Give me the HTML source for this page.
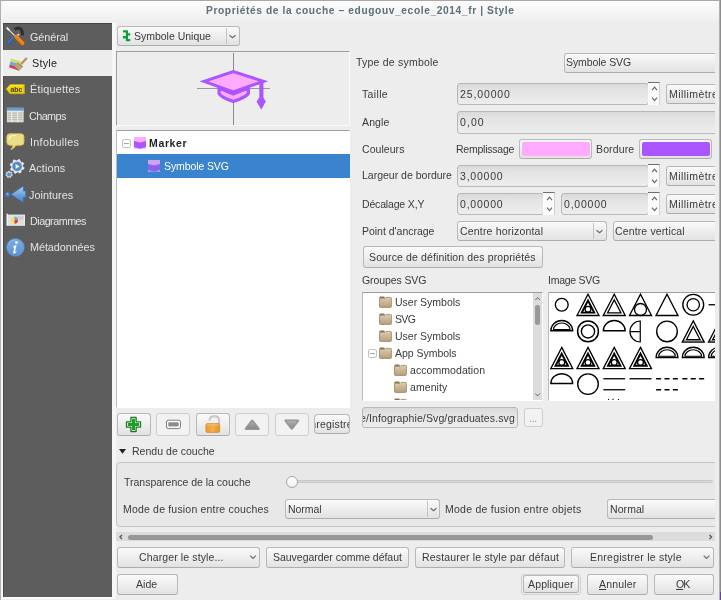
<!DOCTYPE html>
<html lang="fr"><head><meta charset="utf-8"><title>Propriétés de la couche</title>
<style>
html,body{margin:0;padding:0}
body{width:721px;height:600px;overflow:hidden;position:relative;background:#ededed;
 font-family:"Liberation Sans",sans-serif;font-size:10.5px;color:#363b3e;}
.t{will-change:transform}
.a{position:absolute;white-space:nowrap;box-sizing:border-box}
.t{position:absolute;white-space:nowrap;line-height:14px;height:14px}
#tbar{left:1px;top:1px;width:719px;height:22px;background:linear-gradient(#fdfdfd,#ededed)}
#side{left:3px;top:23px;width:109px;height:574px;background:#5d5d5d}
.btn{border:1px solid #b9b9b9;border-bottom-color:#adadad;border-radius:3px;background:linear-gradient(#fafafa,#e2e2e2)}
.btn.dis{border-color:#cdcdcd;background:#f2f2f2}
.ent{border:1px solid #b8b8b8;border-radius:3px;background:linear-gradient(#d9d9d9 0,#e2e2e2 5px,#e6e6e6 50%,#ededed 100%)}
.spb{background:#fbfbfb;border-top:1px solid #6e6e6e}
.frame{border:1px solid;border-color:#9e9e9e #fafafa #fafafa #9e9e9e;background:#ededed}
.white{border:1px solid;border-color:#9e9e9e #fff #fff #bcbcbc;background:#fff}
svg{position:absolute;overflow:visible}
</style></head><body>
<div class="a" style="left:0px;top:0px;width:721px;height:1px;background:#a8a8a8;"></div>
<div class="a" style="left:0px;top:0px;width:1px;height:600px;background:#b0b0b0;"></div>
<div class="a" id="tbar"></div>
<div class="t" style="left:205.90px;top:3.97px;letter-spacing:0.616px;font-size:10.2px;font-weight:bold;color:#5c6f7a;">Propriétés de la couche – edugouv_ecole_2014_fr | Style</div>
<div class="a" id="side"></div>
<div class="a" style="left:3px;top:23px;width:109px;height:1px;background:#444;"></div>
<div class="a" style="left:3px;top:23px;width:1px;height:574px;background:#4c4c4c;"></div>
<div class="a" style="left:3px;top:49.6px;width:109px;height:26.4px;background:#ededed;"></div>
<div class="t" style="left:29.90px;top:29.66px;letter-spacing:-0.037px;font-size:10.8px;color:#e4e4e4;">Général</div>
<div class="t" style="left:31.90px;top:55.99px;letter-spacing:0.221px;font-size:10.8px;color:#1e1e1e;">Style</div>
<div class="t" style="left:29.70px;top:82.32px;letter-spacing:0.241px;font-size:10.8px;color:#e4e4e4;">Étiquettes</div>
<div class="t" style="left:29.40px;top:108.65px;letter-spacing:-0.564px;font-size:10.8px;color:#e4e4e4;">Champs</div>
<div class="t" style="left:29.90px;top:134.98px;letter-spacing:0.296px;font-size:10.8px;color:#e4e4e4;">Infobulles</div>
<div class="t" style="left:29.40px;top:161.31px;letter-spacing:0.132px;font-size:10.8px;color:#e4e4e4;">Actions</div>
<div class="t" style="left:29.40px;top:187.64px;letter-spacing:0.048px;font-size:10.8px;color:#e4e4e4;">Jointures</div>
<div class="t" style="left:29.70px;top:213.97px;letter-spacing:-0.523px;font-size:10.8px;color:#e4e4e4;">Diagrammes</div>
<div class="t" style="left:29.70px;top:240.30px;letter-spacing:-0.054px;font-size:10.8px;color:#e4e4e4;">Métadonnées</div>
<div class="a" style="left:112px;top:23px;width:4px;height:574px;background:#f6f6f6;"></div>
<div class="a" style="left:3px;top:597px;width:112px;height:1.5px;background:#fafafa;"></div>
<div class="a" style="left:1px;top:1px;width:2px;height:599px;background:#f6f6f6;"></div>
<svg style="left:0;top:0" width="130" height="270" viewBox="0 0 130 270">
<defs>
<linearGradient id="gj" x1="0" y1="0" x2="0" y2="1"><stop offset="0" stop-color="#b4d4f2"/><stop offset="0.55" stop-color="#6a9fdc"/><stop offset="1" stop-color="#4a7fc6"/></linearGradient>
<linearGradient id="gi" x1="0" y1="0" x2="0" y2="1"><stop offset="0" stop-color="#7aaae0"/><stop offset="1" stop-color="#5f93d2"/></linearGradient>
</defs>
<g>
<path d="M14.6 29.4 Q19.4 26.6 21.6 30.2 Q22.8 32.6 22.4 35.4" fill="none" stroke="#2b3032" stroke-width="3.1"/>
<path d="M16.9 34.9 L18.6 33.4 L19.6 34.6 L18 36.2 Z" fill="#e6e6e6"/>
<path d="M7.2 28.2 L14.6 35.6" stroke="#e4e4e4" stroke-width="1.1" stroke-linecap="round"/>
<path d="M7.2 28.2 L8.6 29.6" stroke="#fff" stroke-width="1.7" stroke-linecap="round"/>
<path d="M13.6 37.6 L8.6 42.9" stroke="#2f5f9e" stroke-width="3.4" stroke-linecap="round"/>
<path d="M13.2 37.2 L8.4 42.3" stroke="#4a7cc0" stroke-width="1.2" stroke-linecap="round"/>
<path d="M16 36.6 L22.6 43.4" stroke="#f57900" stroke-width="3.8" stroke-linecap="round"/>
<path d="M16.8 36.2 L23.2 42.8" stroke="#fc9a3a" stroke-width="1" stroke-linecap="round"/>
</g>
<g>
<path d="M11 58.5 L21.2 61.5 L20.5 64.6 L10.4 61.4 Z" fill="#d6db6c"/>
<path d="M10.4 61.4 L20.5 64.6 L19.8 67.7 L9.7 64.4 Z" fill="#6fa9e2"/>
<path d="M9.7 64.4 L19.8 67.7 L19 70.8 L9.1 67.3 Z" fill="#d2425c"/>
<path d="M26.3 58.6 L21.7 63.6" stroke="#b39656" stroke-width="2.2" stroke-linecap="round"/>
<path d="M17.4 62.4 L23 66.6 L19.3 70.8 L14.8 66.6 Z" fill="#b9a274"/>
<path d="M17.4 62.4 L23 66.6 L22.3 67.4 L16.7 63.2 Z" fill="#a48c58"/>
</g>
<g>
<path d="M6.3 89.1 L10 84.6 L24.3 84.6 L24.3 93.7 L10 93.7 Z" fill="#edd400" stroke="#c9ad0a" stroke-width="0.9" stroke-linejoin="round"/>
<path d="M7.6 89.1 L10.4 85.7 L23.2 85.7" fill="none" stroke="#fbee7a" stroke-width="0.8"/>
<text x="10.4" y="91.6" font-family="Liberation Sans, sans-serif" font-weight="bold" font-size="7.4" fill="#3a3a2a" textLength="12" lengthAdjust="spacingAndGlyphs">abc</text>
</g>
<g>
<rect x="6.9" y="107.8" width="16.8" height="14.5" fill="#d9dbd2"/>
<rect x="6.9" y="107.8" width="16.8" height="3" fill="#6b99d2"/>
<rect x="8" y="112.6" width="14.6" height="0.9" fill="#b6b8ae"/>
<rect x="8" y="114.8" width="14.6" height="0.9" fill="#b6b8ae"/>
<rect x="8" y="117" width="14.6" height="0.9" fill="#b6b8ae"/>
<rect x="8" y="119.2" width="14.6" height="0.9" fill="#b6b8ae"/>
<rect x="11.3" y="111" width="0.9" height="11.3" fill="#f4f4ee"/><rect x="17.3" y="111" width="0.9" height="11.3" fill="#f4f4ee"/>
<rect x="6.9" y="110.8" width="16.8" height="0.7" fill="#eef"/>
</g>
<g>
<path d="M10 133.8 H20.8 Q23.9 133.8 23.9 136.8 V142.2 Q23.9 145.2 20.8 145.2 H16 Q14.6 148 11 149.6 Q12.8 147.4 13 145.2 H10 Q6.9 145.2 6.9 142.2 V136.8 Q6.9 133.8 10 133.8 Z" fill="#e9dd86" stroke="#e3c64e" stroke-width="0.9"/>
<path d="M9.2 139.6 Q8.8 136 12 135.8 L15.4 135.6" fill="none" stroke="#fffbe0" stroke-width="0.9" stroke-linecap="round"/>
</g>
<g>
<path d="M24.06 167.81 L23.65 169.14 L21.74 169.53 L21.05 170.37 L21.02 172.32 L19.79 172.97 L18.17 171.90 L17.08 172.00 L15.69 173.36 L14.36 172.95 L13.97 171.04 L13.13 170.35 L11.18 170.32 L10.53 169.09 L11.60 167.47 L11.50 166.38 L10.14 164.99 L10.55 163.66 L12.46 163.27 L13.15 162.43 L13.18 160.48 L14.41 159.83 L16.03 160.90 L17.12 160.80 L18.51 159.44 L19.84 159.85 L20.23 161.76 L21.07 162.45 L23.02 162.48 L23.67 163.71 L22.60 165.33 L22.70 166.42 Z" fill="#ececec" stroke="#ececec" stroke-width="0.8" stroke-linejoin="round"/>
<circle cx="17.1" cy="166.4" r="4.5" fill="#4f8ccc" stroke="#3f78b8" stroke-width="0.5"/>
<path d="M15.6 164 L19.6 166.4 L15.6 168.8 Z" fill="#fff"/>
<path d="M12.38 174.73 L12.23 175.45 L11.32 175.76 L10.96 176.22 L10.89 177.17 L10.23 177.50 L9.42 176.98 L8.84 176.99 L8.05 177.53 L7.38 177.22 L7.28 176.26 L6.92 175.81 L6.00 175.53 L5.83 174.81 L6.51 174.14 L6.64 173.57 L6.28 172.68 L6.74 172.10 L7.69 172.22 L8.21 171.96 L8.69 171.13 L9.43 171.12 L9.93 171.94 L10.46 172.18 L11.40 172.04 L11.87 172.61 L11.54 173.51 L11.68 174.08 Z" fill="#d8dce0" stroke="#d8dce0" stroke-width="0.8" stroke-linejoin="round"/>
<circle cx="9.1" cy="174.4" r="2" fill="#5b92cc"/>
</g>
<g>
<path d="M11 194.4 L23.3 186.1 L23.5 190.9 L25.8 190.9 L25.8 197.4 L23.5 197.4 L23.3 202.8 Z" fill="url(#gj)" stroke="#3d6cb2" stroke-width="0.8" stroke-linejoin="round"/>
<circle cx="7.6" cy="194.6" r="2.5" fill="#4f80c6" stroke="#3a66aa" stroke-width="0.6"/>
<circle cx="7.4" cy="193.8" r="1" fill="#86b0e4"/>
</g>
<g>
<rect x="6.5" y="213.8" width="1.6" height="12" fill="#f2f2f2"/>
<rect x="8.1" y="214.6" width="16.9" height="11.2" fill="#ebebe8"/>
<rect x="9.2" y="215.6" width="14.8" height="9.2" fill="#e0e0dc"/>
<path d="M17 216 L23.6 216 L23.6 219 L20 221 Z" fill="#cfd0cb"/>
<path d="M14.5 216.5 A3.6 3.6 0 0 0 14.5 223.7 Z" fill="#f2e264"/>
<path d="M14.5 216.5 A3.6 3.6 0 0 1 18.1 220.1 L14.5 220.1 Z" fill="#6ea4e2"/>
<path d="M18.1 220.1 A3.6 3.6 0 0 1 14.5 223.7 L14.5 220.1 Z" fill="#e43a32"/>
</g>
<g>
<circle cx="15.4" cy="247.4" r="8.9" fill="url(#gi)" stroke="#5286c8" stroke-width="0.7"/>
<path d="M8.6 245.4 Q9.6 240.6 14.6 240" fill="none" stroke="#9cc2ec" stroke-width="0.7"/>
<circle cx="16.5" cy="242.5" r="1.35" fill="#fff"/>
<path d="M12.6 247.2 Q14 245.2 16.6 245 L15 251.6 Q15.6 252 17.2 250.8 Q16 253.6 13 253.8 L14.4 247.6 Q13.6 247.2 12.6 247.2 Z" fill="#fff"/>
</g>
</svg>
<div class="a btn" style="left:117px;top:26px;width:123px;height:20px;"></div>
<div class="t" style="left:134.40px;top:29.06px;letter-spacing:-0.011px;">Symbole Unique</div>
<div class="a" style="left:226px;top:28px;width:1px;height:16px;background:#c4c4c4;"></div>
<svg width="721" height="600" style="left:0;top:0"><path d="M229.5 35.25 L232.5 37.75 L235.5 35.25" fill="none" stroke="#6c6c6c" stroke-width="1.2"/></svg>
<svg style="left:0;top:0" width="140" height="50"><g fill="#00a838"><rect x="122.9" y="30.2" width="5" height="2.4" rx="0.5"/><rect x="125.8" y="33.3" width="4.5" height="2.3" rx="0.5"/><rect x="122.9" y="36.1" width="5" height="2.3" rx="0.5"/><rect x="125.8" y="39" width="4.5" height="2.3" rx="0.5"/><rect x="126" y="31" width="1.9" height="9" fill="#0a9a36"/></g></svg>
<div class="a frame" style="left:116px;top:51px;width:234px;height:75px;"></div>
<div class="a" style="left:233px;top:53px;width:1px;height:72px;background:#8c8c8c;"></div>
<div class="a" style="left:197px;top:88px;width:73px;height:1px;background:#9a9a9a;"></div>
<svg style="left:190px;top:60px" width="90" height="60" viewBox="190 60 90 60">
 <path d="M219 88 L219 93.5 Q221 97.4 233.3 101.5 Q245.6 97.4 248.4 93.5 L248.4 88 L233.3 94 Z" fill="#ffaaff" stroke="#aa55ff" stroke-width="3.1" stroke-linejoin="round"/>
 <path d="M204 81.3 L233.3 71.6 L263.5 81.3 L233.3 92 Z" fill="#ffaaff" stroke="#aa55ff" stroke-width="3" stroke-linejoin="miter"/>
 <path d="M259.3 82 L263.4 82 L263.4 97.5 L265.8 101.5 L261.3 109.7 L256.6 101.5 L259.3 97.5 Z" fill="#aa55ff"/>
</svg>
<div class="a white" style="left:116px;top:130px;width:234px;height:278px;"></div>
<div class="a" style="left:117px;top:154px;width:233px;height:24px;background:#3a83ce;"></div>
<div class="t" style="left:149.40px;top:135.86px;letter-spacing:0.649px;font-weight:bold;color:#222;">Marker</div>
<div class="t" style="left:163.90px;top:159.36px;letter-spacing:-0.105px;color:#fff;">Symbole SVG</div>
<div class="a" style="left:122px;top:139px;width:9px;height:9px;border:1px solid #c2c2c2;border-radius:2px;background:#fff"></div>
<div class="a" style="left:124px;top:143px;width:5px;height:1px;background:#a8a8a8;"></div>
<svg style="left:133.8px;top:137px" width="12" height="12" viewBox="0 0 12 12"><rect width="12" height="11.7" fill="#ffaaff"/><path d="M0 4 L6 5.6 L12 4 L12 10 L6 11.7 L0 10 Z" fill="#aa55ff"/></svg>
<svg style="left:148.2px;top:160.2px" width="12" height="12" viewBox="0 0 12 12"><rect width="12" height="11.7" fill="#cfa2f2"/><path d="M0 4 L6 5.6 L12 4 L12 10 L6 11.7 L0 10 Z" fill="#8b62f0"/></svg>
<div class="a btn" style="left:117px;top:413px;width:34px;height:23px;"></div>
<div class="a btn dis" style="left:156px;top:413px;width:34px;height:23px;"></div>
<div class="a btn" style="left:196px;top:413px;width:34px;height:23px;"></div>
<div class="a btn dis" style="left:235px;top:413px;width:34px;height:23px;"></div>
<div class="a btn dis" style="left:275px;top:413px;width:34px;height:23px;"></div>
<div class="a btn" style="left:314px;top:414px;width:36px;height:20px;border-radius:4px"></div>
<div class="a" style="left:315px;top:415px;width:34px;height:18px;overflow:hidden">
<div class="t" style="left:-11.90px;top:2.06px;letter-spacing:0.184px;">Enregistrer</div>
</div>
<svg style="left:0;top:0" width="360" height="445" viewBox="0 0 360 445">
<defs>
<linearGradient id="gar" x1="0" y1="0" x2="0" y2="1"><stop offset="0" stop-color="#b4b4b4"/><stop offset="1" stop-color="#858585"/></linearGradient>
<linearGradient id="glk" x1="0" y1="0" x2="1" y2="0"><stop offset="0" stop-color="#e89a30"/><stop offset="0.5" stop-color="#f2b04a"/><stop offset="1" stop-color="#e0922a"/></linearGradient>
</defs>
<path d="M130.9 417.5 H136.1 V421.9 H140.5 V427.1 H136.1 V431.5 H130.9 V427.1 H126.5 V421.9 H130.9 Z" fill="#fff" stroke="#1a7a22" stroke-width="1.3" stroke-linejoin="round"/>
<path d="M132.0 418.9 H135.0 V423.0 H139.1 V426.0 H135.0 V430.1 H132.0 V426.0 H127.9 V423.0 H132.0 Z" fill="#18a028"/>
<rect x="166.5" y="420.2" width="14" height="8.4" rx="1.8" fill="#fdfdfd" stroke="#6e6e6e" stroke-width="0.9"/>
<rect x="168.3" y="422.3" width="10.4" height="4.2" rx="0.8" fill="#8c8c8c"/>
<path d="M209.6 420.8 V420.2 Q209.6 416.3 214.3 416.3 Q219 416.3 219 420.2 V424" fill="none" stroke="#b9b9b9" stroke-width="1.9"/>
<path d="M209.6 420.8 V420.2 Q209.6 416.3 214.3 416.3 Q219 416.3 219 420.2 V424" fill="none" stroke="#dcdcdc" stroke-width="0.7"/>
<rect x="205.9" y="423.6" width="13.8" height="8.8" rx="1.3" fill="url(#glk)" stroke="#d58a24" stroke-width="0.7"/>
<rect x="206.8" y="424.4" width="12" height="1.2" fill="#f8c878" opacity="0.8"/>
<path d="M245.6 428.6 L251.8 420.6 Q252.2 420.2 252.6 420.6 L258.8 428.6 Q259 429.2 258.4 429.2 L246 429.2 Q245.4 429.2 245.6 428.6 Z" fill="url(#gar)" stroke="#969696" stroke-width="1.6" stroke-linejoin="round"/>
<path d="M285.2 420.8 L291.4 428.8 Q291.8 429.2 292.2 428.8 L298.4 420.8 Q298.6 420.2 298 420.2 L285.6 420.2 Q285 420.2 285.2 420.8 Z" fill="url(#gar)" stroke="#969696" stroke-width="1.6" stroke-linejoin="round"/>
</svg>
<div class="t" style="left:355.70px;top:55.26px;letter-spacing:0.215px;">Type de symbole</div>
<div class="a btn" style="left:564px;top:53px;width:160px;height:20px;"></div>
<div class="t" style="left:566.40px;top:55.36px;letter-spacing:-0.075px;">Symbole SVG</div>
<div class="t" style="left:362.40px;top:86.56px;letter-spacing:0.352px;">Taille</div>
<div class="a ent" style="left:457px;top:83px;width:192px;height:22px;"></div>
<div class="t" style="left:459.90px;top:86.56px;letter-spacing:0.872px;">25,00000</div>
<div class="a spb" style="left:648px;top:82px;width:12px;height:23px;border-right:1px solid #d0d0d0"></div>
<svg width="721" height="600" style="left:0;top:0"><path d="M652.0 90.1 L654.5 87.1 L657.0 90.1" fill="none" stroke="#666" stroke-width="1.15"/></svg>
<svg width="721" height="600" style="left:0;top:0"><path d="M652.0 97.7 L654.5 100.7 L657.0 97.7" fill="none" stroke="#666" stroke-width="1.15"/></svg>
<div class="a btn" style="left:666px;top:84px;width:60px;height:20px;"></div>
<div class="t" style="left:668.60px;top:86.56px;letter-spacing:0.431px;">Millimètre</div>
<div class="t" style="left:361.90px;top:114.56px;letter-spacing:0.135px;">Angle</div>
<div class="a ent" style="left:457px;top:111px;width:270px;height:23px;"></div>
<div class="t" style="left:459.90px;top:114.56px;letter-spacing:1.087px;">0,00</div>
<div class="t" style="left:361.90px;top:141.56px;letter-spacing:0.053px;">Couleurs</div>
<div class="t" style="left:456.40px;top:141.56px;letter-spacing:-0.230px;">Remplissage</div>
<div class="a btn" style="left:519px;top:139px;width:73px;height:20px;"></div>
<div class="a" style="left:521.5px;top:141.5px;width:68.5px;height:14.5px;background:#ffaaff;border-radius:2px"></div>
<div class="t" style="left:595.90px;top:141.56px;letter-spacing:0.140px;">Bordure</div>
<div class="a btn" style="left:639px;top:139px;width:73px;height:20px;"></div>
<div class="a" style="left:641.6px;top:141.5px;width:68.5px;height:14.5px;background:#aa55ff;border-radius:2px"></div>
<div class="t" style="left:361.90px;top:168.26px;letter-spacing:-0.000px;">Largeur de bordure</div>
<div class="a ent" style="left:457px;top:165px;width:192px;height:22px;"></div>
<div class="t" style="left:459.90px;top:168.56px;letter-spacing:0.789px;">3,00000</div>
<div class="a spb" style="left:648px;top:164px;width:12px;height:23px;border-right:1px solid #d0d0d0"></div>
<svg width="721" height="600" style="left:0;top:0"><path d="M652.0 172.1 L654.5 169.1 L657.0 172.1" fill="none" stroke="#666" stroke-width="1.15"/></svg>
<svg width="721" height="600" style="left:0;top:0"><path d="M652.0 179.7 L654.5 182.7 L657.0 179.7" fill="none" stroke="#666" stroke-width="1.15"/></svg>
<div class="a btn" style="left:666px;top:166px;width:60px;height:20px;"></div>
<div class="t" style="left:668.60px;top:168.56px;letter-spacing:0.431px;">Millimètre</div>
<div class="t" style="left:361.90px;top:196.56px;letter-spacing:-0.165px;">Décalage X,Y</div>
<div class="a ent" style="left:457px;top:193px;width:87px;height:22px;"></div>
<div class="t" style="left:459.90px;top:196.56px;letter-spacing:0.789px;">0,00000</div>
<div class="a spb" style="left:543px;top:192px;width:12px;height:23px;border-right:1px solid #d0d0d0"></div>
<svg width="721" height="600" style="left:0;top:0"><path d="M547.0 200.1 L549.5 197.1 L552.0 200.1" fill="none" stroke="#666" stroke-width="1.15"/></svg>
<svg width="721" height="600" style="left:0;top:0"><path d="M547.0 207.7 L549.5 210.7 L552.0 207.7" fill="none" stroke="#666" stroke-width="1.15"/></svg>
<div class="a ent" style="left:561px;top:193px;width:88px;height:22px;"></div>
<div class="t" style="left:563.90px;top:196.56px;letter-spacing:0.789px;">0,00000</div>
<div class="a spb" style="left:648px;top:192px;width:12px;height:23px;border-right:1px solid #d0d0d0"></div>
<svg width="721" height="600" style="left:0;top:0"><path d="M652.0 200.1 L654.5 197.1 L657.0 200.1" fill="none" stroke="#666" stroke-width="1.15"/></svg>
<svg width="721" height="600" style="left:0;top:0"><path d="M652.0 207.7 L654.5 210.7 L657.0 207.7" fill="none" stroke="#666" stroke-width="1.15"/></svg>
<div class="a btn" style="left:666px;top:194px;width:60px;height:20px;"></div>
<div class="t" style="left:668.60px;top:196.56px;letter-spacing:0.431px;">Millimètre</div>
<div class="t" style="left:361.90px;top:224.06px;letter-spacing:-0.017px;">Point d'ancrage</div>
<div class="a btn" style="left:457px;top:221px;width:150px;height:20px;"></div>
<div class="t" style="left:460.10px;top:224.06px;letter-spacing:0.189px;">Centre horizontal</div>
<div class="a" style="left:593px;top:223px;width:1px;height:16px;background:#c4c4c4;"></div>
<svg width="721" height="600" style="left:0;top:0"><path d="M596.5 230.25 L599.5 232.75 L602.5 230.25" fill="none" stroke="#6c6c6c" stroke-width="1.2"/></svg>
<div class="a btn" style="left:613px;top:221px;width:115px;height:20px;"></div>
<div class="t" style="left:615.40px;top:224.06px;letter-spacing:0.135px;">Centre vertical</div>
<div class="a btn" style="left:363px;top:246px;width:180px;height:22px;"></div>
<div class="t" style="left:369.40px;top:250.26px;letter-spacing:0.124px;">Source de définition des propriétés</div>
<div class="t" style="left:361.90px;top:273.26px;letter-spacing:-0.097px;">Groupes SVG</div>
<div class="t" style="left:547.90px;top:273.26px;letter-spacing:-0.260px;">Image SVG</div>
<div class="a white" style="left:362px;top:292px;width:181px;height:109px;"></div>
<div class="a" style="left:363px;top:293px;width:179px;height:107px;overflow:hidden">
<svg width="0" height="0"><defs><linearGradient id="fg" x1="0" y1="0" x2="0" y2="1"><stop offset="0" stop-color="#dccdb2"/><stop offset="1" stop-color="#b79e78"/></linearGradient></defs></svg>
<svg style="left:16px;top:3.1px" width="13" height="12" viewBox="0 0 13 12"><path d="M0.5 1.2 Q0.5 0.4 1.3 0.4 L5 0.4 L6.2 1.8 L0.5 2.6 Z" fill="#8d7250"/><path d="M0.5 2.4 L6 2.4 L7 1.4 L11.6 1.4 Q12.4 1.4 12.4 2.2 L12.4 10.6 Q12.4 11.4 11.6 11.4 L1.3 11.4 Q0.5 11.4 0.5 10.6 Z" fill="url(#fg)" stroke="#9b8263" stroke-width="0.8"/></svg>
<div class="t" style="left:32.20px;top:1.56px;letter-spacing:-0.005px;">User Symbols</div>
<svg style="left:16px;top:20.0px" width="13" height="12" viewBox="0 0 13 12"><path d="M0.5 1.2 Q0.5 0.4 1.3 0.4 L5 0.4 L6.2 1.8 L0.5 2.6 Z" fill="#8d7250"/><path d="M0.5 2.4 L6 2.4 L7 1.4 L11.6 1.4 Q12.4 1.4 12.4 2.2 L12.4 10.6 Q12.4 11.4 11.6 11.4 L1.3 11.4 Q0.5 11.4 0.5 10.6 Z" fill="url(#fg)" stroke="#9b8263" stroke-width="0.8"/></svg>
<div class="t" style="left:32.20px;top:18.56px;letter-spacing:-0.644px;">SVG</div>
<svg style="left:16px;top:36.9px" width="13" height="12" viewBox="0 0 13 12"><path d="M0.5 1.2 Q0.5 0.4 1.3 0.4 L5 0.4 L6.2 1.8 L0.5 2.6 Z" fill="#8d7250"/><path d="M0.5 2.4 L6 2.4 L7 1.4 L11.6 1.4 Q12.4 1.4 12.4 2.2 L12.4 10.6 Q12.4 11.4 11.6 11.4 L1.3 11.4 Q0.5 11.4 0.5 10.6 Z" fill="url(#fg)" stroke="#9b8263" stroke-width="0.8"/></svg>
<div class="t" style="left:32.20px;top:35.56px;letter-spacing:-0.005px;">User Symbols</div>
<svg style="left:16px;top:53.8px" width="13" height="12" viewBox="0 0 13 12"><path d="M0.5 1.2 Q0.5 0.4 1.3 0.4 L5 0.4 L6.2 1.8 L0.5 2.6 Z" fill="#8d7250"/><path d="M0.5 2.4 L6 2.4 L7 1.4 L11.6 1.4 Q12.4 1.4 12.4 2.2 L12.4 10.6 Q12.4 11.4 11.6 11.4 L1.3 11.4 Q0.5 11.4 0.5 10.6 Z" fill="url(#fg)" stroke="#9b8263" stroke-width="0.8"/></svg>
<div class="t" style="left:32.20px;top:52.56px;letter-spacing:-0.027px;">App Symbols</div>
<svg style="left:30.8px;top:70.7px" width="13" height="12" viewBox="0 0 13 12"><path d="M0.5 1.2 Q0.5 0.4 1.3 0.4 L5 0.4 L6.2 1.8 L0.5 2.6 Z" fill="#8d7250"/><path d="M0.5 2.4 L6 2.4 L7 1.4 L11.6 1.4 Q12.4 1.4 12.4 2.2 L12.4 10.6 Q12.4 11.4 11.6 11.4 L1.3 11.4 Q0.5 11.4 0.5 10.6 Z" fill="url(#fg)" stroke="#9b8263" stroke-width="0.8"/></svg>
<div class="t" style="left:46.90px;top:69.56px;letter-spacing:0.073px;">accommodation</div>
<svg style="left:30.8px;top:87.6px" width="13" height="12" viewBox="0 0 13 12"><path d="M0.5 1.2 Q0.5 0.4 1.3 0.4 L5 0.4 L6.2 1.8 L0.5 2.6 Z" fill="#8d7250"/><path d="M0.5 2.4 L6 2.4 L7 1.4 L11.6 1.4 Q12.4 1.4 12.4 2.2 L12.4 10.6 Q12.4 11.4 11.6 11.4 L1.3 11.4 Q0.5 11.4 0.5 10.6 Z" fill="url(#fg)" stroke="#9b8263" stroke-width="0.8"/></svg>
<div class="t" style="left:46.90px;top:86.56px;letter-spacing:0.072px;">amenity</div>
<svg style="left:30.8px;top:104.5px" width="13" height="12" viewBox="0 0 13 12"><path d="M0.5 1.2 Q0.5 0.4 1.3 0.4 L5 0.4 L6.2 1.8 L0.5 2.6 Z" fill="#8d7250"/><path d="M0.5 2.4 L6 2.4 L7 1.4 L11.6 1.4 Q12.4 1.4 12.4 2.2 L12.4 10.6 Q12.4 11.4 11.6 11.4 L1.3 11.4 Q0.5 11.4 0.5 10.6 Z" fill="url(#fg)" stroke="#9b8263" stroke-width="0.8"/></svg>
<div class="a" style="left:5px;top:55.5px;width:9px;height:9px;border:1px solid #c2c2c2;border-radius:2px;background:#fff"></div>
<div class="a" style="left:7px;top:59.5px;width:5px;height:1px;background:#a8a8a8"></div>
<div class="a" style="left:170px;top:0;width:9px;height:107px;background:#dcdcdc"></div>
<div class="a" style="left:172.3px;top:12.4px;width:4.4px;height:19.6px;background:#989898;border-radius:2.2px"></div>
<svg style="left:170px;top:0" width="9" height="107"><path d="M2.4 7 L4.6 4.6 L6.8 7 M2.4 100.5 L4.6 102.9 L6.8 100.5" fill="none" stroke="#666" stroke-width="1"/></svg>
</div>
<div class="a white" style="left:548px;top:292px;width:180px;height:109px;"></div>
<div class="a" style="left:549px;top:293px;width:166px;height:107px;overflow:hidden"><svg style="left:-549px;top:-293px" width="721" height="600" viewBox="0 0 721 600"><circle cx="561.75" cy="304.75" r="6.4" stroke="#000" fill="none" stroke-width="1.35"/>
<path d="M588.00 294.25 L599.00 315.50 L577.00 315.50 Z" stroke="#000" fill="none" stroke-width="1.3" stroke-linejoin="miter"/><path d="M588.00 300.54 L594.23 312.60 L581.77 312.60 Z" stroke="#000" fill="none" stroke-width="1.9" stroke-linejoin="miter"/><circle cx="588" cy="309.35" r="2.9" stroke="#000" fill="none" stroke-width="1.3"/>
<path d="M614.25 294.25 L625.25 315.50 L603.25 315.50 Z" stroke="#000" fill="none" stroke-width="1.35" stroke-linejoin="miter"/><path d="M614.25 299.89 L620.97 312.90 L607.53 312.90 Z" stroke="#000" fill="none" stroke-width="1.2" stroke-linejoin="miter"/>
<path d="M640.50 294.25 L651.50 315.50 L629.50 315.50 Z" stroke="#000" fill="none" stroke-width="1.35" stroke-linejoin="miter"/><circle cx="640.5" cy="309.45000000000005" r="6.0" stroke="#000" fill="none" stroke-width="1.35"/>
<path d="M667.00 294.25 L678.00 315.50 L656.00 315.50 Z" stroke="#000" fill="none" stroke-width="1.35" stroke-linejoin="miter"/>
<circle cx="693.25" cy="304.75" r="10.4" stroke="#000" fill="none" stroke-width="1.35"/><circle cx="693.25" cy="304.75" r="6.2" stroke="#000" fill="none" stroke-width="1.35"/>
<path d="M708.60 304.75 H730.50" stroke="#000" stroke-width="1.3"/>
<path d="M550.85 330.75 A10.9 10.25 0 0 1 572.65 330.75 Z" stroke="#000" fill="none" stroke-width="1.35" stroke-linejoin="miter"/><path d="M553.45 329.60 A8.3 6.60 0 0 1 570.05 329.60 Z" stroke="#000" fill="none" stroke-width="1.1" stroke-linejoin="miter"/>
<circle cx="588" cy="331.4" r="10.4" stroke="#000" fill="none" stroke-width="1.5"/><circle cx="588" cy="331.4" r="6.6" stroke="#000" fill="none" stroke-width="1.35"/>
<path d="M603.35 330.75 A10.9 10.25 0 0 1 625.15 330.75 Z" stroke="#000" fill="none" stroke-width="1.35" stroke-linejoin="miter"/>
<path d="M640.25 321 A10.3 10.5 0 0 0 640.25 342 Z M630.0 331.7 H640.25" stroke="#000" fill="none" stroke-width="1.2"/>
<circle cx="667" cy="331.4" r="10.3" stroke="#000" fill="none" stroke-width="1.35"/>
<path d="M683.65 340.9 H702.85" stroke="#aaa" stroke-width="2"/><path d="M693.25 320.90 L704.25 342.15 L682.25 342.15 Z" stroke="#000" fill="none" stroke-width="1.3" stroke-linejoin="miter"/><path d="M693.25 326.54 L699.97 339.55 L686.53 339.55 Z" stroke="#000" fill="none" stroke-width="1.3" stroke-linejoin="miter"/>
<path d="M709.9 340.9 H729.1" stroke="#aaa" stroke-width="2"/><path d="M719.50 320.90 L730.50 342.15 L708.50 342.15 Z" stroke="#000" fill="none" stroke-width="1.3" stroke-linejoin="miter"/><path d="M719.50 326.54 L726.22 339.55 L712.78 339.55 Z" stroke="#000" fill="none" stroke-width="1.3" stroke-linejoin="miter"/>
<path d="M561.75 347.40 L572.75 368.65 L550.75 368.65 Z" stroke="#000" fill="none" stroke-width="1.3" stroke-linejoin="miter"/><path d="M561.75 353.69 L567.98 365.75 L555.52 365.75 Z" stroke="#000" fill="none" stroke-width="1.9" stroke-linejoin="miter"/><circle cx="561.75" cy="362.5" r="2.9" stroke="#000" fill="none" stroke-width="1.3"/>
<path d="M588.00 347.40 L599.00 368.65 L577.00 368.65 Z" stroke="#000" fill="none" stroke-width="1.3" stroke-linejoin="miter"/><path d="M588.00 353.69 L594.23 365.75 L581.77 365.75 Z" stroke="#000" fill="none" stroke-width="1.9" stroke-linejoin="miter"/><circle cx="588" cy="362.5" r="2.9" stroke="#000" fill="none" stroke-width="1.3"/>
<path d="M614.25 347.40 L625.25 368.65 L603.25 368.65 Z" stroke="#000" fill="none" stroke-width="1.3" stroke-linejoin="miter"/><path d="M614.25 353.69 L620.48 365.75 L608.02 365.75 Z" stroke="#000" fill="none" stroke-width="1.9" stroke-linejoin="miter"/><circle cx="614.25" cy="362.5" r="2.9" stroke="#000" fill="none" stroke-width="1.3"/>
<path d="M640.50 347.40 L651.50 368.65 L629.50 368.65 Z" stroke="#000" fill="none" stroke-width="1.3" stroke-linejoin="miter"/><path d="M640.50 353.69 L646.73 365.75 L634.27 365.75 Z" stroke="#000" fill="none" stroke-width="1.9" stroke-linejoin="miter"/><circle cx="640.5" cy="362.5" r="2.9" stroke="#000" fill="none" stroke-width="1.3"/>
<path d="M656.10 357.50 A10.9 10.25 0 0 1 677.90 357.50 Z" stroke="#000" fill="none" stroke-width="1.35" stroke-linejoin="miter"/><path d="M658.70 356.30 A8.3 6.50 0 0 1 675.30 356.30 Z" stroke="#000" fill="none" stroke-width="1.1" stroke-linejoin="miter"/>
<path d="M682.35 357.50 A10.9 10.25 0 0 1 704.15 357.50 Z" stroke="#000" fill="none" stroke-width="1.35" stroke-linejoin="miter"/><path d="M684.95 356.30 A8.3 6.50 0 0 1 701.55 356.30 Z" stroke="#000" fill="none" stroke-width="1.1" stroke-linejoin="miter"/>
<path d="M708.60 357.50 A10.9 10.25 0 0 1 730.40 357.50 Z" stroke="#000" fill="none" stroke-width="1.35" stroke-linejoin="miter"/><path d="M711.20 356.30 A8.3 6.50 0 0 1 727.80 356.30 Z" stroke="#000" fill="none" stroke-width="1.1" stroke-linejoin="miter"/>
<path d="M550.85 383.50 A10.9 9.75 0 0 1 572.65 383.50 Z" stroke="#000" fill="none" stroke-width="1.35" stroke-linejoin="miter"/>
<circle cx="588" cy="384.1" r="10.3" stroke="#000" fill="none" stroke-width="1.35"/>
<path d="M603.35 378.75 H625.15" stroke="#000" stroke-width="1.3"/><path d="M603.35 389.75 H625.15" stroke="#000" stroke-width="1.3"/>
<path d="M629.50 378.75 H651.50" stroke="#000" stroke-width="1.3"/>
<path d="M656.10 378.75 H678.00" stroke="#000" stroke-width="1.3" stroke-dasharray="5 3.4"/><path d="M656.10 389.75 H678.00" stroke="#000" stroke-width="1.3" stroke-dasharray="5 3.4"/>
<path d="M682.35 378.75 H704.25" stroke="#000" stroke-width="1.3" stroke-dasharray="5 3.4"/>
<path d="M608.5 400 V399 M613 400 V398.6 M618.5 400 V399" stroke="#000" stroke-width="1"/></svg></div>
<div class="a ent" style="left:362px;top:407px;width:156px;height:21px;"></div>
<div class="a" style="left:363px;top:407px;width:154px;height:20px;overflow:hidden">
<div class="t" style="left:-2.90px;top:3.76px;letter-spacing:0.120px;">e/Infographie/Svg/graduates.svg</div>
</div>
<div class="a btn dis" style="left:524px;top:408px;width:19px;height:19px;"></div>
<div class="t" style="left:529.40px;top:410.56px;letter-spacing:-0.283px;color:#999;">...</div>
<div class="a" style="left:715px;top:48px;width:6px;height:392px;background:#ededed;"></div>
<svg style="left:118.5px;top:449px" width="8" height="5"><path d="M0 0h7l-3.5 4.8z" fill="#222"/></svg>
<div class="t" style="left:131.90px;top:444.06px;letter-spacing:0.027px;">Rendu de couche</div>
<div class="a" style="left:116px;top:462px;width:612px;height:65px;border:1px solid #c4c4c4;border-radius:4px;background:#e8e8e8"></div>
<div class="t" style="left:123.90px;top:474.56px;letter-spacing:-0.007px;">Transparence de la couche</div>
<div class="a" style="left:290px;top:480px;width:423px;height:3px;border:1px solid #c8c8c8;background:#d8d8d8;border-radius:2px"></div>
<div class="a" style="left:286px;top:475.5px;width:12px;height:12px;border:1px solid #a6a6a6;border-radius:6px;background:linear-gradient(#fff,#efefef)"></div>
<div class="t" style="left:122.90px;top:501.56px;letter-spacing:0.186px;">Mode de fusion entre couches</div>
<div class="a btn" style="left:285px;top:499px;width:155px;height:20px;"></div>
<div class="t" style="left:288.40px;top:501.56px;letter-spacing:-0.029px;">Normal</div>
<div class="a" style="left:427px;top:501px;width:1px;height:16px;background:#c4c4c4;"></div>
<svg width="721" height="600" style="left:0;top:0"><path d="M430.5 508.25 L433.5 510.75 L436.5 508.25" fill="none" stroke="#6c6c6c" stroke-width="1.2"/></svg>
<div class="t" style="left:445.40px;top:501.56px;letter-spacing:0.254px;">Mode de fusion entre objets</div>
<div class="a btn" style="left:607px;top:499px;width:120px;height:20px;"></div>
<div class="t" style="left:610.40px;top:501.56px;letter-spacing:0.071px;">Normal</div>
<div class="a" style="left:715px;top:460px;width:6px;height:70px;background:#ededed;"></div>
<div class="a" style="left:116px;top:532px;width:599px;height:9px;background:#dcdcdc;"></div>
<div class="a" style="left:128px;top:534.5px;width:525px;height:5px;background:#979797;border-radius:3px"></div>
<svg width="721" height="600" style="left:0;top:0"><path d="M122 535 L120 537 L122 539 M709.5 535 L711.5 537 L709.5 539" fill="none" stroke="#555" stroke-width="1.4"/></svg>
<div class="a btn" style="left:117px;top:547px;width:143px;height:21px;"></div>
<div class="t" style="left:139.10px;top:549.76px;letter-spacing:0.122px;">Charger le style...</div>
<svg width="721" height="600" style="left:0;top:0"><path d="M250.2 555.6 L253 558.4 L255.8 555.6" fill="none" stroke="#6c6c6c" stroke-width="1.2"/></svg>
<div class="a btn" style="left:266px;top:547px;width:143px;height:21px;"></div>
<div class="t" style="left:273.40px;top:549.76px;letter-spacing:-0.029px;">Sauvegarder comme défaut</div>
<div class="a btn" style="left:415px;top:547px;width:150px;height:21px;"></div>
<div class="t" style="left:421.70px;top:549.76px;letter-spacing:0.178px;">Restaurer le style par défaut</div>
<div class="a btn" style="left:571px;top:547px;width:143px;height:21px;"></div>
<div class="t" style="left:589.50px;top:549.76px;letter-spacing:0.239px;">Enregistrer le style</div>
<svg width="721" height="600" style="left:0;top:0"><path d="M703.7 555.6 L706.5 558.4 L709.3 555.6" fill="none" stroke="#6c6c6c" stroke-width="1.2"/></svg>
<div class="a btn" style="left:117px;top:574px;width:61px;height:21px;"></div>
<div class="t" style="left:136.40px;top:576.76px;letter-spacing:0.061px;">Aide</div>
<div class="a btn" style="left:521px;top:574px;width:60px;height:21px;border-color:#d2d2d2;background:#e9e9e9"></div>
<div class="a btn" style="left:523px;top:575px;width:56px;height:18px;"></div>
<div class="t" style="left:528.40px;top:576.76px;letter-spacing:0.141px;">Appliquer</div>
<div class="a btn" style="left:587px;top:574px;width:61px;height:21px;"></div>
<div class="t" style="left:598.70px;top:576.76px;letter-spacing:0.166px;"><u>A</u>nnuler</div>
<div class="a btn" style="left:654px;top:574px;width:60px;height:21px;"></div>
<div class="t" style="left:676.40px;top:576.76px;letter-spacing:-0.972px;"><u>O</u>K</div>
<div class="a" style="left:719px;top:0px;width:1px;height:600px;background:#b0b0b0;"></div>
<div class="a" style="left:720px;top:0px;width:1px;height:600px;background:#8e8e8e;"></div>
<div class="a" style="left:720px;top:592px;width:1px;height:8px;background:#6a3fa0;"></div>
</body></html>
